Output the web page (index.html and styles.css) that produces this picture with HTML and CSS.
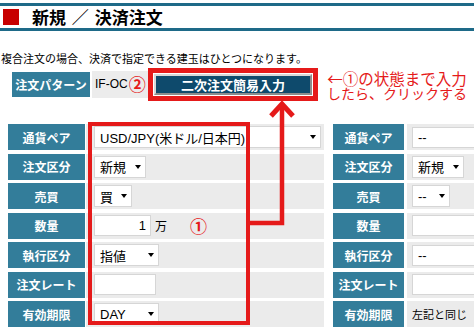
FILE: index.html
```html
<!DOCTYPE html>
<html lang="ja">
<head>
    <meta charset="UTF-8">
    <title>新規 ／ 決済注文</title>
    <link rel="stylesheet" href="styles.css">
</head>
<body>
    <div class="title-bar">
        <span class="mark"></span>
        <h1 class="title">新規 ／ 決済注文</h1>
    </div>

    <p class="note">複合注文の場合、決済で指定できる建玉はひとつになります。</p>

    <div class="pattern-row">
        <div class="label pattern-label">注文パターン</div>
        <div class="pattern-value">IF-OC<span class="num-mark">②</span></div>
        <div class="hl-box">
            <button class="btn-sub">二次注文簡易入力</button>
        </div>
        <div class="callout">
            <div class="callout-1">←①の状態まで入力</div>
            <div class="callout-2">したら、クリックする</div>
        </div>
    </div>

    <div class="order-grid">
        <!-- 通貨ペア -->
        <div class="label">通貨ペア</div>
        <div class="value">
            <div class="select w-pair"><span>USD/JPY(米ドル/日本円)</span></div>
        </div>
        <div class="label">通貨ペア</div>
        <div class="value value-r"><div class="input w-wide">--</div></div>

        <!-- 注文区分 -->
        <div class="label">注文区分</div>
        <div class="value"><div class="select w-kind"><span>新規</span></div></div>
        <div class="label">注文区分</div>
        <div class="value value-r"><div class="select w-kind"><span>新規</span></div></div>

        <!-- 売買 -->
        <div class="label">売買</div>
        <div class="value"><div class="select w-side"><span>買</span></div></div>
        <div class="label">売買</div>
        <div class="value value-r"><div class="select w-side"><span>--</span></div></div>

        <!-- 数量 -->
        <div class="label">数量</div>
        <div class="value">
            <div class="input w-qty align-r">1</div>
            <span class="unit">万</span>
            <span class="num-mark num-one">①</span>
        </div>
        <div class="label">数量</div>
        <div class="value value-r"><div class="input w-wide"></div></div>

        <!-- 執行区分 -->
        <div class="label">執行区分</div>
        <div class="value"><div class="select w-exec"><span>指値</span></div></div>
        <div class="label">執行区分</div>
        <div class="value value-r"><div class="input w-wide">--</div></div>

        <!-- 注文レート -->
        <div class="label">注文レート</div>
        <div class="value"><div class="input w-rate"></div></div>
        <div class="label">注文レート</div>
        <div class="value value-r"><div class="input w-wide"></div></div>

        <!-- 有効期限 -->
        <div class="label">有効期限</div>
        <div class="value"><div class="select w-exec"><span>DAY</span></div></div>
        <div class="label">有効期限</div>
        <div class="value value-r"><span class="plain">左記と同じ</span></div>
    </div>

    <!-- 注釈の赤枠と矢印 -->
    <div class="frame-one"></div>
    <svg class="arrow-up" width="50" height="132" viewBox="0 0 50 132">
        <polyline points="0,124 33,124 33,6" fill="none" stroke="#e51a1a" stroke-width="4.5"/>
        <polyline points="22,17 33,5 44,17" fill="none" stroke="#e51a1a" stroke-width="5"/>
    </svg>
</body>
</html>
```

FILE: styles.css
```css
body {
    margin: 0;
    font-family: "Liberation Sans", "Noto Sans CJK JP", sans-serif;
    font-size: 12px;
    color: #000;
    background: #fff;
    overflow: hidden;
}
.title-bar {
    margin-top: 3px;
    height: 22px;
    border-top: 3px solid #1e6a88;
    border-bottom: 3px solid #1e6a88;
    display: flex;
    align-items: center;
}
.mark {
    width: 16px;
    height: 16px;
    margin-left: 3px;
    background: #c80000;
}
.title {
    margin: 0 0 0 13px;
    font-family: "Noto Sans CJK JP", sans-serif;
    font-size: 17px;
    font-weight: bold;
    line-height: 22px;
    word-spacing: 2px;
}
.note {
    margin: 20px 0 0 1px;
    font-family: "Noto Sans CJK JP", sans-serif;
    font-size: 11px;
    line-height: 14px;
}
.pattern-row {
    margin-top: 2px;
    display: flex;
    align-items: center;
}
.label {
    background: #337d9a;
    color: #fff;
    font-family: "Noto Sans CJK JP", sans-serif;
    font-weight: bold;
    font-size: 12px;
    display: flex;
    align-items: center;
    justify-content: center;
}
.pattern-label {
    margin-left: 12px;
    width: 78px;
    height: 25px;
}
.pattern-value {
    margin-left: 2px;
    width: 53px;
    height: 27px;
    padding-left: 3px;
    background: #ececec;
    display: flex;
    align-items: center;
    font-size: 12px;
}
.num-mark {
    color: #e51a1a;
    font-family: "Noto Sans CJK JP", sans-serif;
    font-weight: bold;
    font-size: 17px;
    line-height: 18px;
    margin-left: 1px;
}
.hl-box {
    border: 5px solid #e51a1a;
    padding: 1px;
    display: flex;
}
.btn-sub {
    width: 158px;
    height: 21px;
    padding: 0;
    background: #0e4a6c;
    color: #fff;
    font-family: "Noto Sans CJK JP", sans-serif;
    font-weight: bold;
    font-size: 13px;
    line-height: 17px;
    border: 2px solid;
    border-color: #d8d8d8 #8c8c8c #8c8c8c #d8d8d8;
}
.callout {
    margin-left: 2px;
    padding-top: 3px;
    width: 154px;
    color: #e51a1a;
    font-family: "Noto Sans CJK JP", sans-serif;
    text-align: center;
}
.callout-1 {
    font-size: 15.5px;
    line-height: 16px;
    height: 16px;
}
.callout-2 {
    font-size: 14px;
    line-height: 15px;
    height: 15px;
}
.order-grid {
    margin: 23px 0 0 8px;
    display: grid;
    grid-template-columns: 77px 239px 80px 1fr;
    grid-auto-rows: 26px;
    column-gap: 0;
    row-gap: 3.5px;
}
.order-grid .label:nth-child(4n+3) {
    margin-left: 9px;
}
.value {
    margin-left: 1px;
    background: #ebebeb;
    display: flex;
    align-items: center;
    padding-left: 8px;
    overflow: hidden;
    white-space: nowrap;
}
.value-r {
    margin-left: 3px;
    padding-left: 5px;
}
.select,
.input {
    box-sizing: border-box;
    height: 22px;
    background: #fff;
    border: 1px solid #d6d6d6;
    display: flex;
    align-items: center;
    padding: 0 4px 0 5px;
    font-family: "Liberation Sans", "Noto Sans CJK JP", sans-serif;
    font-size: 13px;
    flex-shrink: 0;
}
.input {
    height: 21px;
}
.select span {
    flex: 1;
}
.select::after {
    content: "";
    border-left: 3.5px solid transparent;
    border-right: 3.5px solid transparent;
    border-top: 4px solid #000;
    margin-left: 4px;
}
.align-r {
    justify-content: flex-end;
}
.w-pair { width: 227px; }
.w-kind { width: 52px; }
.w-side { width: 38px; }
.w-exec { width: 65px; }
.w-qty { width: 57px; }
.w-rate { width: 62px; }
.w-wide { width: 120px; }
.unit {
    margin-left: 4px;
    font-family: "Noto Sans CJK JP", sans-serif;
    font-size: 12px;
}
.num-one {
    margin-left: 23px;
}
.plain {
    font-family: "Noto Sans CJK JP", sans-serif;
    font-size: 11px;
}
.frame-one {
    position: absolute;
    left: 88px;
    top: 122px;
    width: 154px;
    height: 195px;
    border: 4.5px solid #e51a1a;
}
.arrow-up {
    position: absolute;
    left: 249px;
    top: 99px;
}
```
